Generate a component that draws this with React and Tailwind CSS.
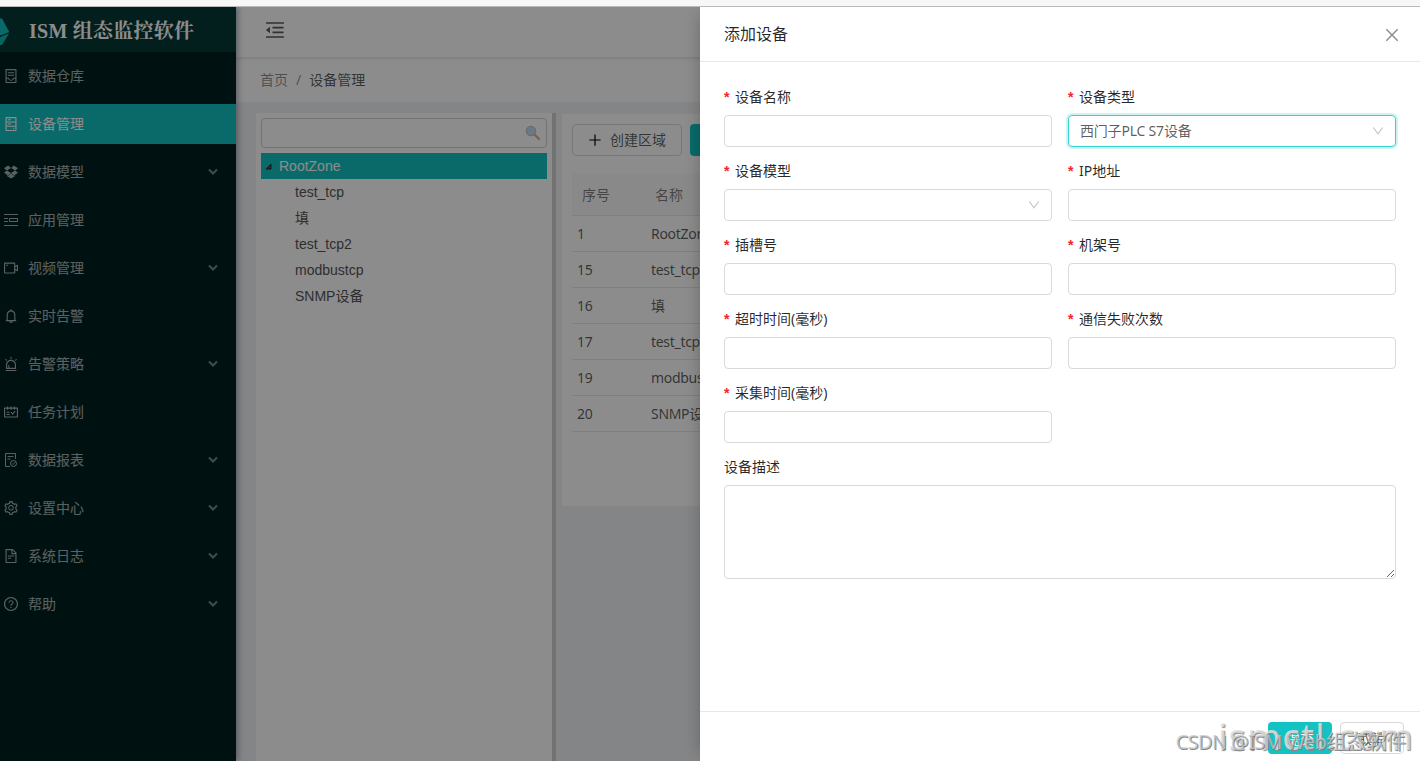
import React from 'react';
import {
  AiOutlineContainer,
  AiOutlineHdd,
  AiOutlineDropbox,
  AiOutlineVideoCamera,
  AiOutlineBell,
  AiOutlineAlert,
  AiOutlineSchedule,
  AiOutlineSetting,
  AiOutlineFileText,
  AiOutlineQuestionCircle,
  AiOutlineMenuFold,
  AiOutlinePlus,
  AiOutlineClose,
  AiOutlineDown,
} from 'react-icons/ai';

// the ant glyphs carry a 64 unit margin, this crops it off
const TIGHT = '64 64 896 896';

function AppIcon() {
  return (
    <svg viewBox="0 0 14 14" className="w-3.5 h-3.5" fill="none" stroke="currentColor">
      <path d="M0 1.5h14M0 5.5h4M0 8.5h4M0 12.5h14M5.5 5.5h8v3h-8z" />
    </svg>
  );
}

function ReportIcon() {
  return (
    <svg viewBox="0 0 14 14" className="w-3.5 h-3.5" fill="none" stroke="currentColor">
      <path d="M6 13.5H1.5V.5h10V6M3.5 3.5h6M3.5 6h3" />
      <circle cx="9.5" cy="10.5" r="3" />
      <path d="M8.2 10.5l1 1 1.8-2.2" strokeWidth="0.9" />
    </svg>
  );
}

const menu = [
  { label: '数据仓库', icon: AiOutlineContainer },
  { label: '设备管理', icon: AiOutlineHdd, active: true },
  { label: '数据模型', icon: AiOutlineDropbox, open: true },
  { label: '应用管理', icon: AppIcon },
  { label: '视频管理', icon: AiOutlineVideoCamera, open: true },
  { label: '实时告警', icon: AiOutlineBell },
  { label: '告警策略', icon: AiOutlineAlert, open: true },
  { label: '任务计划', icon: AiOutlineSchedule },
  { label: '数据报表', icon: ReportIcon, open: true },
  { label: '设置中心', icon: AiOutlineSetting, open: true },
  { label: '系统日志', icon: AiOutlineFileText, open: true },
  { label: '帮助', icon: AiOutlineQuestionCircle, open: true },
];

const tree = ['test_tcp', '填', 'test_tcp2', 'modbustcp', 'SNMP设备'];

const rows = [
  [1, 'RootZone'],
  [15, 'test_tcp'],
  [16, '填'],
  [17, 'test_tcp2'],
  [19, 'modbustcp'],
  [20, 'SNMP设备'],
];

const fields = [
  { label: '设备名称' },
  { label: '设备类型', select: true, value: '西门子PLC S7设备', focused: true },
  { label: '设备模型', select: true },
  { label: 'IP地址' },
  { label: '插槽号' },
  { label: '机架号' },
  { label: '超时时间(毫秒)' },
  { label: '通信失败次数' },
  { label: '采集时间(毫秒)' },
];

function Sidebar() {
  return (
    <aside className="relative z-10 w-[236px] shrink-0 bg-[#002020] shadow-[2px_0_6px_rgba(0,21,41,0.35)]">
      <div className="flex h-[45px] items-center bg-[#053735]">
        <svg viewBox="0 0 10 30" className="h-[30px] w-[10px] shrink-0">
          <path d="M0 3.5 H2 L9.3 17 L2 20 H0z" fill="#13c2c2" />
          <path d="M9 18.5 L2 30 H0 V22z" fill="#12b4b4" />
        </svg>
        <h1 className="ml-[19px] pt-0.5 whitespace-nowrap font-['Liberation_Serif','Noto_Serif_CJK_SC','Noto_Sans_CJK_SC',serif] text-[20px] leading-none font-bold tracking-[0.25px] text-white">
          ISM 组态监控软件
        </h1>
      </div>
      <ul className="mt-1 flex flex-col gap-2">
        {menu.map(({ label, icon: Icon, active, open }) => (
          <li
            key={label}
            className={`flex h-10 items-center pl-1 pr-[18px] text-[14px] ${
              active ? 'bg-[#13c2c2] text-white' : 'text-white/65'
            }`}
          >
            {Icon === AppIcon || Icon === ReportIcon ? <Icon /> : <Icon viewBox={TIGHT} className="h-3.5 w-3.5" />}
            <span className="ml-2.5 flex-1 pb-0.5">{label}</span>
            {open && (
              <svg viewBox="0 0 10 8" className="h-2 w-2.5 opacity-75" fill="none" stroke="currentColor" strokeWidth="2">
                <path d="M1 1.5 L5 5.5 L9 1.5" />
              </svg>
            )}
          </li>
        ))}
      </ul>
    </aside>
  );
}

function DeviceTree() {
  return (
    <div className="w-[296px] shrink-0 bg-white px-[5px] pt-[5px] font-['Liberation_Sans','Noto_Sans_CJK_SC',sans-serif] text-[14px] text-[#555]">
      <div className="flex h-[30px] items-center justify-end rounded-[4px] border border-[#d0d0d0] pr-[5px]">
        <svg viewBox="0 0 16 16" className="h-4 w-4">
          <path d="M9.5 9.5 L14 14" stroke="#dcb184" strokeWidth="2.4" strokeLinecap="round" />
          <circle cx="6" cy="6" r="4.6" fill="#c4dcf5" stroke="#c0c4d0" strokeWidth="1.4" />
        </svg>
      </div>
      <div className="mt-[5px] flex h-[26px] items-center bg-[#13c2c2] pl-1 text-white">
        <svg viewBox="0 0 7 7" className="h-[7px] w-[7px]">
          <path d="M6 1.2 V6 H1.2z" fill="#555" stroke="#222" />
        </svg>
        <span className="ml-[7px]">RootZone</span>
      </div>
      {tree.map((name) => (
        <div key={name} className="flex h-[26px] items-center pl-[34px]">{name}</div>
      ))}
    </div>
  );
}

function DeviceTable() {
  return (
    <div className="mt-px h-[392px] flex-1 bg-white px-2.5 pt-2.5">
      <div className="flex gap-2">
        <button className="flex h-8 w-[110px] shrink-0 items-center justify-center gap-2 whitespace-nowrap rounded-[4px] border border-[#d9d9d9] text-[14px] text-black/65">
          <AiOutlinePlus viewBox={TIGHT} className="h-3.5 w-3.5 text-black" />
          <span className="pb-0.5">创建区域</span>
        </button>
        <button className="h-8 w-[110px] shrink-0 rounded-[4px] bg-[#13c2c2] text-[14px] text-white">创建设备</button>
      </div>
      <div className="mt-[18px] text-[14px] text-black/65">
        <div className="flex h-[42px] items-center border-b border-[#e8e8e8] bg-[#fafafa] text-black/50">
          <span className="w-[83px] pl-2.5">序号</span>
          <span>名称</span>
        </div>
        {rows.map(([id, name]) => (
          <div key={id} className="flex h-9 items-center border-b border-[#e8e8e8] tracking-[-0.3px]">
            <span className="w-[79px] pl-[5px]">{id}</span>
            <span>{name}</span>
          </div>
        ))}
      </div>
    </div>
  );
}

function Field({ label, select, value, focused }) {
  return (
    <div>
      <label className="flex h-[22px] items-center pb-0.5 text-[14px] text-black/85">
        <span className="mr-1 w-[7px] pt-0.5 font-['Liberation_Sans'] text-[14px] leading-none font-bold text-[#f5222d]">*</span>
        {label}
      </label>
      <div
        className={`mt-[7px] flex h-8 items-center justify-between rounded-[4px] border pl-[11px] pr-[11px] text-[14px] text-black/65 ${
          focused ? 'border-[#36cfc9] shadow-[0_0_0_2px_rgba(19,194,194,0.2)]' : 'border-[#d9d9d9]'
        }`}
      >
        <span className="pb-0.5 tracking-[-0.2px]">{value}</span>
        {select && <AiOutlineDown viewBox={TIGHT} className="h-3 w-3 text-black/25" />}
      </div>
    </div>
  );
}

function Drawer() {
  return (
    <section className="absolute inset-y-0 right-0 flex w-[720px] flex-col bg-white shadow-[-6px_0_16px_-8px_rgba(0,0,0,0.3)]">
      <header className="flex h-[55px] shrink-0 items-center justify-between border-b border-[#e8e8e8] px-6">
        <h2 className="text-[16px] text-black/85">添加设备</h2>
        <AiOutlineClose viewBox={TIGHT} className="-mr-1 mt-0.5 h-4 w-4 text-black/45" />
      </header>
      <div className="flex-1 px-6 pt-6">
        <div className="grid grid-cols-2 gap-x-4 gap-y-[13px]">
          {fields.map((f) => (
            <Field key={f.label} {...f} />
          ))}
        </div>
        <label className="mt-[13px] flex h-[22px] items-center pb-0.5 text-[14px] text-black/85">设备描述</label>
        <textarea className="mt-[7px] block h-[94px] w-full resize-y rounded-[4px] border border-[#d9d9d9]" />
      </div>
      <footer className="relative flex h-[50px] shrink-0 justify-end gap-2 border-t border-[#e8e8e8] pt-2.5 pr-4">
        <button className="h-8 w-16 rounded-[4px] bg-[#13c2c2] text-[14px] text-white">提交</button>
        <button className="h-8 w-16 rounded-[4px] border border-[#d9d9d9] text-[14px] text-black/75">取消</button>
        <span className="absolute right-[6px] bottom-px text-[36px] leading-[46px] tracking-[1.4px] whitespace-nowrap text-[#e6e6e6]/80 [text-shadow:1px_1px_1px_#888]">
          ismctl.com
        </span>
        <span className="absolute right-[14px] bottom-[6px] text-[20px] leading-[26px] whitespace-nowrap text-[#c8c8c8]/80 [text-shadow:1px_1px_0_#777d]">
          <span className="tracking-[-0.7px]">CSDN @ISM Web</span>组态软件
        </span>
      </footer>
    </section>
  );
}

export default function App() {
  return (
    <div className="flex h-[761px] w-[1420px] flex-col overflow-hidden font-['Noto_Sans','Noto_Sans_CJK_SC',sans-serif]">
      <div className="h-[7px] shrink-0 border-b border-[#b9bbb9] bg-[#f7f7f7]" />
      <div className="relative flex min-h-0 flex-1 overflow-hidden">
        <Sidebar />
        <main className="flex min-w-0 flex-1 flex-col bg-[#f0f2f5]">
          <div className="relative flex h-[50px] shrink-0 items-center bg-white pl-[29px] shadow-[0_1px_4px_rgba(0,21,41,0.15)]">
            <AiOutlineMenuFold viewBox={TIGHT} className="-mt-1 h-5 w-5 text-black/65" />
          </div>
          <div className="flex h-[45px] shrink-0 items-center bg-white pl-6 text-[14px] text-black/45">
            <span>首页</span>
            <span className="mx-2">/</span>
            <span className="text-black/65">设备管理</span>
          </div>
          <div className="flex min-h-0 flex-1 pt-[11px] pl-5">
            <DeviceTree />
            <div className="mr-1.5 w-1 shrink-0 bg-[#cfcfcf]" />
            <DeviceTable />
          </div>
        </main>
        <div className="absolute inset-0 z-20 bg-black/45">
          <Drawer />
        </div>
      </div>
    </div>
  );
}
